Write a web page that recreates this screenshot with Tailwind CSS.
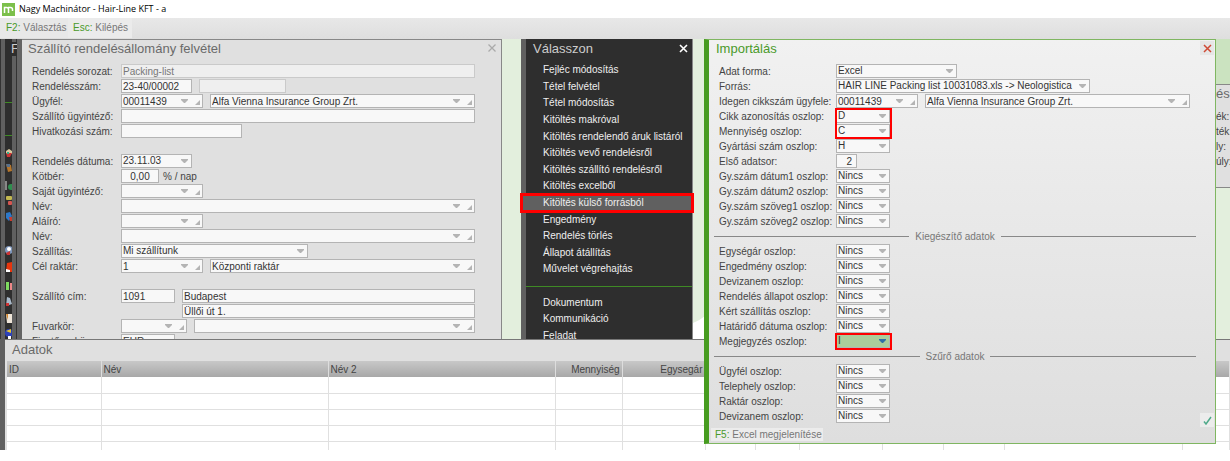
<!DOCTYPE html>
<html lang="hu">
<head>
  <meta charset="UTF-8" />
  <meta name="viewport" content="width=device-width, initial-scale=1.0" />
  <title>Nagy Machinátor - Hair-Line KFT - a</title>
  <script src="https://cdn.jsdelivr.net/npm/@tailwindcss/browser@4"></script>
</head>
<body class="min-h-screen flex flex-col overflow-hidden bg-white font-['Liberation_Sans',Arial,sans-serif] text-[10px] leading-[14px] text-[#444]">

  <!-- Title bar -->
  <header class="flex items-center h-[18px] gap-1 px-[2px] bg-white">
    <svg class="w-[13px] h-[13px]" viewBox="0 0 13 13">
      <rect width="13" height="13" fill="#7cc04b" />
      <path d="M2.500 10V4.500H4.500a2 2 0 0 1 2 2V10M6 4.500h2.500a2 2 0 0 1 2 2V8" fill="none" stroke="#fff" stroke-width="1.500" />
    </svg>
    <h1 class="font-['Open_Sans','Noto_Sans',sans-serif] text-[9px] font-medium text-black whitespace-nowrap">Nagy Machinátor - Hair-Line KFT - a</h1>
  </header>

  <!-- Toolbar -->
  <nav class="flex h-[21px] bg-linear-to-b from-[#e8e8e8] to-[#dedede] text-[#777]">
    <button class="h-[20px] w-[68px] pl-[6px] text-left bg-[#e8e8e8] whitespace-nowrap"><span class="text-[#4a9a2a]">F2:</span> Választás</button>
    <button class="h-[20px] w-[64px] pl-[5px] text-left bg-[#ebebeb] whitespace-nowrap"><span class="text-[#4a9a2a]">Esc:</span> Kilépés</button>
  </nav>

  <main class="relative flex-1">
    <!-- Desktop -->
    <div class="relative flex h-[300px] overflow-hidden bg-[#e3efdd]">
      <!-- Windows stacked behind the form -->
      <div class="w-[1px] bg-[#333]"></div>
      <div class="w-[4px] bg-[#606060]"></div>
      <div class="w-[7px] bg-[#2e2e2e] overflow-hidden">
        <svg class="w-[7px] h-[300px]" viewBox="0 0 7 300">
          <path d="M0 63.500h7M0 96.500h7" stroke="#3f8a25" />
          <path d="M1 112l3-2 3 2v3H1z" fill="#d8c9a0" /><path d="M1 114h6l-2 4H2z" fill="#c33" /><path d="M2 113h2v2H2z" fill="#3a8" />
          <path d="M1 125l5 1 1 6-4 1z" fill="#b5762c" /><path d="M1 125h4v3H2z" fill="#58708a" />
          <path d="M1 142v9" stroke="#888" stroke-width="2" /><circle cx="6" cy="148" r="3" fill="#2f8f4f" />
          <rect x="1" y="157" width="6" height="4" rx="1" fill="#c3b850" /><rect x="3" y="162" width="4" height="4" rx="1" fill="#d65550" />
          <path d="M1 174l4-1 2 4-3 5-3-3z" fill="#2d78c8" /><path d="M4 178h3v4H5z" fill="#c93a2c" />
          <circle cx="4" cy="211" r="4" fill="#7d94b8" /><circle cx="4" cy="210" r="2" fill="#fff" /><path d="M1 214l4-2v4H2z" fill="#c33" />
          <path d="M2 224l5-1v10H1z" fill="#e8350c" /><path d="M1 230l4 1v2H1z" fill="#fff" />
          <path d="M1 243h3v8H1z" fill="#7edb60" /><path d="M5 244h2v7H5z" fill="#e88" />
          <path d="M2 258l3 1 2 6-6 2z" fill="#a8b8c8" /><path d="M1 264h3v3H1z" fill="#c33" />
          <path d="M1 275h6v9H2z" fill="#eee5d8" /><path d="M1 275h2v6z" fill="#d5862c" />
          <circle cx="4" cy="294" r="4" fill="#2c42b8" /><path d="M1 292l5-2v4z" fill="#e6c52e" /><path d="M3 297h3v3H3z" fill="#fff" />
        </svg>
      </div>
      <div class="w-[4px] bg-[#606060]"></div>
      <div class="w-[1px] bg-[#333]"></div>
      <div class="w-[5px] bg-[#646464]"></div>
      <span class="absolute left-[11px] top-[3px] w-[6px] overflow-hidden bg-[#2e2e2e] text-[13px] text-[#ccc]">F</span>

      <!-- Order form -->
      <section class="w-[480px] shrink-0 border-t border-r border-[#888] bg-[#e0e0e0]">
        <div class="flex justify-between h-[24px] pl-[6px] pr-[4px]">
          <h2 class="pt-[2px] text-[13px] text-[#6a6a6a]">Szállító rendelésállomány felvétel</h2>
          <button class="w-[10px] h-[16px]" aria-label="Bezárás">
            <svg class="w-[10px] h-[8px]" viewBox="0 0 10 8"><path d="M1.500.5l7 7m0-7l-7 7" stroke="#aaa" stroke-width="1.300" /></svg>
          </button>
        </div>
        <form id="orderForm" class="pl-[10px]"></form>
      </section>

      <div class="w-[19px] shrink-0"></div>

      <!-- Menu -->
      <section class="w-[172px] shrink-0 border-l-[5px] border-r border-l-[#606060] border-r-[#888] bg-[#2e2e2e]">
        <div class="flex justify-between h-[23px] pl-[7px] pr-[4px]">
          <h2 class="pt-[3px] text-[13px] text-[#ccc]">Válasszon</h2>
          <button class="w-[9px] h-[18px]" aria-label="Bezárás">
            <svg class="w-[9px] h-[9px]" viewBox="0 0 9 9"><path d="M1 1l7 7m0-7l-7 7" stroke="#fff" stroke-width="1.600" /></svg>
          </button>
        </div>
        <ul id="menu" class="flex flex-col h-[282px] text-[#eee]"></ul>
      </section>
      <svg class="w-[12px] h-[24px] self-end" viewBox="0 0 12 24"><path d="M0 8Q6 6 12 1V24H0z" fill="#fff" /></svg>

      <!-- Totals, mostly behind the import window -->
      <section class="absolute right-0 top-0 w-[14px]">
        <div class="h-[45px] bg-[#cbe3c0]"></div>
        <div class="h-[104px] pt-[2px] border-y border-[#888] bg-[#e0e0e0] whitespace-nowrap">
          <h2 class="h-[22px] text-[13px] text-[#6a6a6a]">és</h2>
          <p class="h-[15px] pt-[1px]">ék:</p>
          <p class="h-[15px] pt-[1px]">ték:</p>
          <p class="h-[15px] pt-[1px]">ly:</p>
          <p class="h-[15px] pt-[1px]">úly:</p>
        </div>
      </section>
    </div>

    <!-- Data grid -->
    <section class="h-[111px] overflow-hidden border-l-[5px] border-l-[#606060]">
      <div class="border-t border-t-[#777] bg-[#e0e0e0] pl-[2px]">
        <h2 class="h-[21px] pl-[5px] pt-[3px] text-[13px] text-[#6a6a6a]">Adatok</h2>
        <table class="table-fixed w-full border-collapse bg-white">
          <colgroup>
            <col class="w-[94px]" /><col class="w-[227px]" /><col class="w-[227px]" /><col class="w-[67px]" /><col class="w-[83px]" />
            <col class="w-[50px]" /><col class="w-[44px]" /><col class="w-[83px]" /><col class="w-[61px]" /><col class="w-[61px]" /><col class="w-[178px]" /><col />
          </colgroup>
          <thead>
            <tr id="gridHead" class="h-[16px] bg-linear-to-b from-[#c8c8c8] to-[#a8a8a8]"></tr>
          </thead>
          <tbody id="gridBody"></tbody>
        </table>
      </div>
    </section>

    <!-- Import window -->
    <section class="absolute left-[704px] top-0 w-[512px] border border-l-[5px] border-[#7fb661] border-l-[#479c20] bg-linear-to-b from-[#f1f1f1] to-[#dedede]">
      <div class="flex justify-between h-[24px] pl-[7px] pr-[1px]">
        <h2 class="pt-[2px] text-[13px] text-[#4a9a2a]">Importálás</h2>
        <button class="flex items-center justify-center w-[14px] h-[14px] mt-[1px] bg-[#e6e6e6]" aria-label="Bezárás">
          <svg class="w-[9px] h-[9px]" viewBox="0 0 9 9"><path d="M1 1l7 7m0-7l-7 7" stroke="#cf4a35" stroke-width="1.500" /></svg>
        </button>
      </div>
      <form id="importForm" class="pl-[10px]"></form>
      <div class="flex justify-between items-start h-[19px] pl-[2px] pr-[1px]">
        <button class="w-[112px] h-[13px] mt-[4px] pl-[4px] text-left leading-[13px] bg-[#ececec] text-[#777] whitespace-nowrap"><span class="text-[#4a9a2a]">F5:</span> Excel megjelenítése</button>
        <button class="flex items-center justify-center w-[14px] h-[14px] -mt-[11px] bg-[#ececec]" aria-label="Rendben">
          <svg class="w-[9px] h-[9px]" viewBox="0 0 9 9"><path d="M1 5.500l2 2.500L8 1" fill="none" stroke="#4fa98a" stroke-width="1.500" /></svg>
        </button>
      </div>
    </section>
  </main>

  <script>
    const down = (pos, color = "text-[#b4b4b4]") => `<svg class="absolute top-[5px] ${pos} w-[7px] h-[4px] pointer-events-none ${color}" viewBox="0 0 7 4"><path d="M0 0h7v1L4 4H3L0 1z" fill="currentColor"/></svg>`;
    const corner = `<svg class="absolute top-[6px] right-[3px] w-[5px] h-[5px] pointer-events-none text-[#b4b4b4]" viewBox="0 0 5 5"><path d="M5 0v5H0z" fill="currentColor"/></svg>`;
    const box = "block w-full h-[14px] px-[1px] border text-[10px] leading-[12px] appearance-none rounded-none outline-none";
    const normal = "border-[#b4b4b4] bg-[#f8f8f8] text-[#333]";
    const off = "border-[#cacaca] bg-[#efefef] text-[#777]";
    const active = "border-[#b4b4b4] bg-[#abcd9b] text-[#333]";

    // field types: text, off, num, select, lookup, active
    function field([type, width, value = ""], id, label) {
      const attrs = `id="${id}" aria-label="${label}"`;
      let inner;
      if (type === "select") {
        inner = `<select ${attrs} class="${box} ${normal}"><option>${value}</option></select>${down("right-[4px]")}`;
      } else if (type === "active") {
        inner = `<select ${attrs} class="${box} ${active}"><option>${value}</option></select>${down("right-[4px]", "text-[#2f6fa8]")}`;
      } else if (type === "lookup") {
        inner = `<input ${attrs} value="${value}" class="${box} ${normal}" />${down("right-[15px]")}${corner}`;
      } else if (type === "off") {
        inner = `<input ${attrs} value="${value}" disabled class="${box} ${off}" />`;
      } else if (type === "num") {
        inner = `<input ${attrs} value="${value}" class="${box} ${normal} text-center" />`;
      } else {
        inner = `<input ${attrs} value="${value}" class="${box} ${normal}" />`;
      }
      return `<div class="relative ${width}">${inner}</div>`;
    }

    function renderForm(target, rows, labelWidth) {
      const form = document.getElementById(target);
      form.innerHTML = rows.map((row, i) => {
        if (!row) return `<div class="h-[15px]"></div>`;
        if (row.divider) {
          return `<div class="flex items-center gap-[6px] h-[15px] -ml-[5px] pr-[19px] text-[#777]">
            <hr class="flex-1 border-[#888]" /><span>${row.divider}</span><hr class="flex-1 border-[#888]" /></div>`;
        }
        const [label, fields, suffix] = row;
        const text = label
          ? `<label for="${target}${i}-0" class="${labelWidth} shrink-0 pt-[1px] whitespace-nowrap">${label}</label>`
          : `<span class="${labelWidth} shrink-0"></span>`;
        return `<div class="relative flex h-[15px]">${text}
          <div class="flex gap-[7px] ${label ? "" : "pl-[61px]"}">${fields.map((f, n) => field(f, `${target}${i}-${n}`, label)).join("")}${suffix ? `<span class="-ml-[3px] pt-[1px]">${suffix}</span>` : ""}</div>
          ${row[3] || ""}</div>`;
      }).join("");
    }

    const frame = (size) => `<div class="absolute left-[116px] -top-[1px] w-[57px] ${size} border-2 border-[#f00] pointer-events-none z-10"></div>`;

    renderForm("orderForm", [
      ["Rendelés sorozat:", [["off", "w-[354px]", "Packing-list"]]],
      ["Rendelésszám:", [["text", "w-[71px]", "23-40/00002"], ["off", "w-[87px]"]]],
      ["Ügyfél:", [["lookup", "w-[82px]", "00011439"], ["lookup", "w-[265px]", "Alfa Vienna Insurance Group Zrt."]]],
      ["Szállító ügyintéző:", [["text", "w-[354px]"]]],
      ["Hivatkozási szám:", [["text", "w-[121px]"]]],
      null,
      ["Rendelés dátuma:", [["select", "w-[71px]", "23.11.03"]]],
      ["Kötbér:", [["num", "w-[38px]", "0,00"]], "% / nap"],
      ["Saját ügyintéző:", [["lookup", "w-[82px]"]]],
      ["Név:", [["lookup", "w-[354px]"]]],
      ["Aláíró:", [["lookup", "w-[82px]"]]],
      ["Név:", [["lookup", "w-[354px]"]]],
      ["Szállítás:", [["select", "w-[187px]", "Mi szállítunk"]]],
      ["Cél raktár:", [["lookup", "w-[82px]", "1"], ["lookup", "w-[265px]", "Központi raktár"]]],
      null,
      ["Szállító cím:", [["text", "w-[54px]", "1091"], ["text", "w-[293px]", "Budapest"]]],
      ["", [["text", "w-[293px]", "Üllői út 1."]]],
      ["Fuvarkör:", [["lookup", "w-[66px]"], ["lookup", "w-[281px]"]]],
      ["Fizetőeszköz:", [["text", "w-[54px]", "EUR"]]],
    ], "w-[89px]");

    const none = (label) => [label, [["select", "w-[54px]", "Nincs"]]];

    renderForm("importForm", [
      ["Adat forma:", [["select", "w-[121px]", "Excel"]]],
      ["Forrás:", [["select", "w-[254px]", "HAIR LINE Packing list 10031083.xls -> Neologistica"]]],
      ["Idegen cikkszám ügyfele:", [["lookup", "w-[82px]", "00011439"], ["lookup", "w-[265px]", "Alfa Vienna Insurance Group Zrt."]]],
      ["Cikk azonosítás oszlop:", [["select", "w-[54px]", "D"]], "", frame("h-[31px]")],
      ["Mennyiség oszlop:", [["select", "w-[54px]", "C"]]],
      ["Gyártási szám oszlop:", [["select", "w-[54px]", "H"]]],
      ["Első adatsor:", [["num", "w-[21px]", "&nbsp;&nbsp;2"]]],
      none("Gy.szám dátum1 oszlop:"),
      none("Gy.szám dátum2 oszlop:"),
      none("Gy.szám szöveg1 oszlop:"),
      none("Gy.szám szöveg2 oszlop:"),
      { divider: "Kiegészítő adatok" },
      none("Egységár oszlop:"),
      none("Engedmény oszlop:"),
      none("Devizanem oszlop:"),
      none("Rendelés állapot oszlop:"),
      none("Kért szállítás oszlop:"),
      none("Határidő dátuma oszlop:"),
      ["Megjegyzés oszlop:", [["active", "w-[54px]", "I"]], "", frame("h-[17px]")],
      { divider: "Szűrő adatok" },
      none("Ügyfél oszlop:"),
      none("Telephely oszlop:"),
      none("Raktár oszlop:"),
      none("Devizanem oszlop:"),
    ], "w-[117px]");

    // Menu, null is the separator line
    const items = [
      "Fejléc módosítás", "Tétel felvétel", "Tétel módosítás", "Kitöltés makróval",
      "Kitöltés rendelendő áruk listáról", "Kitöltés vevő rendelésről",
      "Kitöltés szállító rendelésről", "Kitöltés excelből", "Kitöltés külső forrásból",
      "Engedmény", "Rendelés törlés", "Állapot átállítás", "Művelet végrehajtás",
      null, "Dokumentum", "Kommunikáció", "Feladat",
    ];
    document.getElementById("menu").innerHTML = items.map((item) => {
      if (!item) return `<li class="flex-1 flex items-center"><div class="w-full h-px bg-[#3f8a25]"></div></li>`;
      const selected = item === "Kitöltés külső forrásból";
      return `<li class="relative flex-1 flex ${selected ? "bg-[#606060]" : ""}">
        <button class="w-full pl-[17px] text-left whitespace-nowrap">${item}</button>
        ${selected ? `<div class="absolute -left-[6px] -right-[2px] -inset-y-[2px] border-[3px] border-[#f00] pointer-events-none"></div>` : ""}</li>`;
    }).join("");

    // Grid
    const cols = ["ID", "Név", "Név 2", "Mennyiség", "Egysegár", "", "", "", "", "", "", ""];
    document.getElementById("gridHead").innerHTML = cols.map((c, i) =>
      `<th class="p-0 px-[2px] border-r border-[#ddd] font-normal leading-[15px] ${i > 2 ? "text-right" : "text-left"}">${c}</th>`).join("");
    document.getElementById("gridBody").innerHTML = Array(5).fill(
      `<tr class="h-[16px]">${cols.map(() => `<td class="p-0 border-r border-b border-[#e0e0e0]"></td>`).join("")}</tr>`).join("");
  </script>
</body>
</html>
